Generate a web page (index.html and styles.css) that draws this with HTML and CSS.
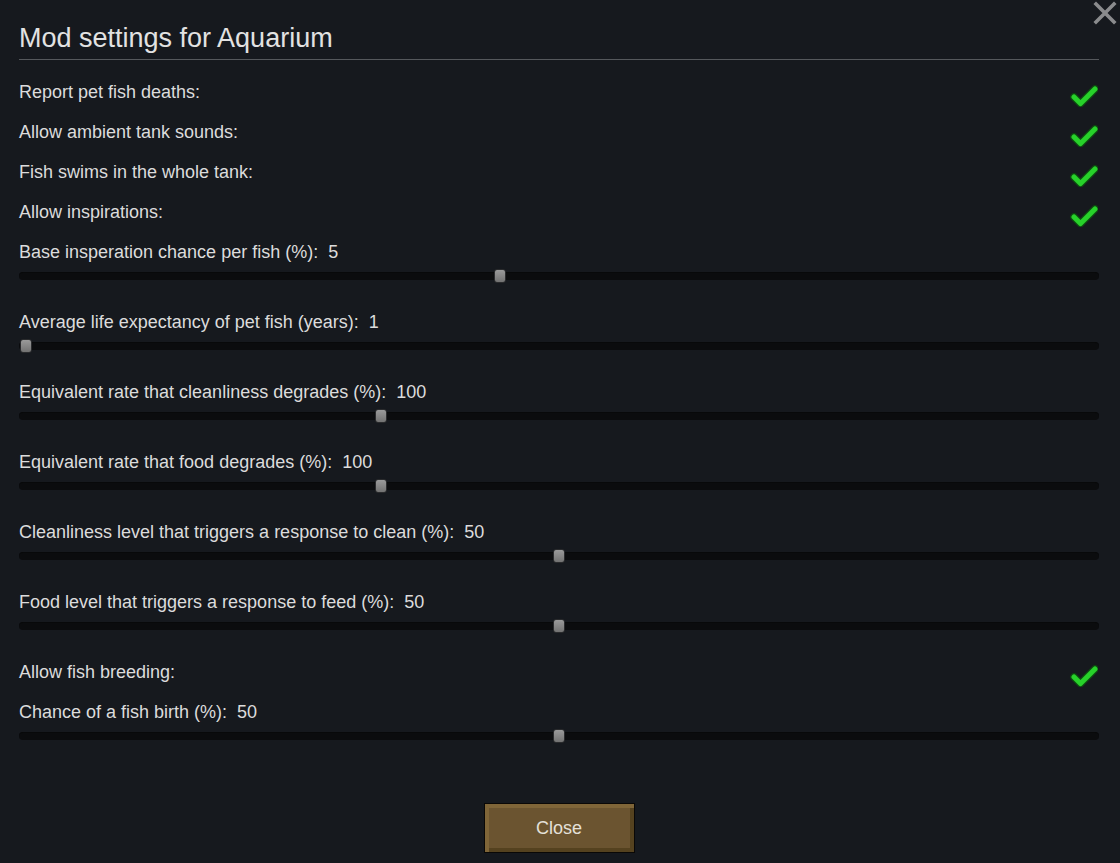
FILE: index.html
```html
<!DOCTYPE html>
<html>
<head>
<meta charset="utf-8">
<link rel="stylesheet" href="styles.css">
</head>
<body>
<div class="window">
  <button class="close-x" aria-label="Close">
    <svg width="24" height="24" viewBox="0 0 24 24"><path d="M3 3 L21 21 M21 3 L3 21" stroke="#8a8b8d" stroke-width="3.6" stroke-linecap="square"/></svg>
  </button>
  <h1 class="title">Mod settings for Aquarium</h1>
  <div class="settings">
    <div class="check-row"><span class="label">Report pet fish deaths:</span><span class="check"><svg width="28" height="24" viewBox="0 0 28 24"><polyline points="4,14 10.5,20.5 25,6" class="ck-out"/><polyline points="4,14 10.5,20.5 25,6" class="ck-in"/></svg></span></div>
    <div class="check-row"><span class="label">Allow ambient tank sounds:</span><span class="check"><svg width="28" height="24" viewBox="0 0 28 24"><polyline points="4,14 10.5,20.5 25,6" class="ck-out"/><polyline points="4,14 10.5,20.5 25,6" class="ck-in"/></svg></span></div>
    <div class="check-row"><span class="label">Fish swims in the whole tank:</span><span class="check"><svg width="28" height="24" viewBox="0 0 28 24"><polyline points="4,14 10.5,20.5 25,6" class="ck-out"/><polyline points="4,14 10.5,20.5 25,6" class="ck-in"/></svg></span></div>
    <div class="check-row"><span class="label">Allow inspirations:</span><span class="check"><svg width="28" height="24" viewBox="0 0 28 24"><polyline points="4,14 10.5,20.5 25,6" class="ck-out"/><polyline points="4,14 10.5,20.5 25,6" class="ck-in"/></svg></span></div>

    <div class="slider">
      <div class="label">Base insperation chance per fish (%):&nbsp; 5</div>
      <div class="track"><span class="thumb" style="--f:0.4444"></span></div>
    </div>
    <div class="slider">
      <div class="label">Average life expectancy of pet fish (years):&nbsp; 1</div>
      <div class="track"><span class="thumb" style="--f:0"></span></div>
    </div>
    <div class="slider">
      <div class="label">Equivalent rate that cleanliness degrades (%):&nbsp; 100</div>
      <div class="track"><span class="thumb" style="--f:0.3333"></span></div>
    </div>
    <div class="slider">
      <div class="label">Equivalent rate that food degrades (%):&nbsp; 100</div>
      <div class="track"><span class="thumb" style="--f:0.3333"></span></div>
    </div>
    <div class="slider">
      <div class="label">Cleanliness level that triggers a response to clean (%):&nbsp; 50</div>
      <div class="track"><span class="thumb" style="--f:0.5"></span></div>
    </div>
    <div class="slider">
      <div class="label">Food level that triggers a response to feed (%):&nbsp; 50</div>
      <div class="track"><span class="thumb" style="--f:0.5"></span></div>
    </div>

    <div class="check-row"><span class="label">Allow fish breeding:</span><span class="check"><svg width="28" height="24" viewBox="0 0 28 24"><polyline points="4,14 10.5,20.5 25,6" class="ck-out"/><polyline points="4,14 10.5,20.5 25,6" class="ck-in"/></svg></span></div>
    <div class="slider">
      <div class="label">Chance of a fish birth (%):&nbsp; 50</div>
      <div class="track"><span class="thumb" style="--f:0.5"></span></div>
    </div>
  </div>
  <div class="footer">
    <button class="btn-close">Close</button>
  </div>
</div>
</body>
</html>
```

FILE: styles.css
```css
html, body {
  margin: 0;
  padding: 0;
  background: #16191e;
}
body {
  width: 1120px;
  height: 863px;
  overflow: hidden;
  font-family: "Liberation Sans", Arial, sans-serif;
  color: #dcdcdc;
}
.window {
  position: relative;
  padding: 0 21px 0 19px;
}
.close-x {
  position: absolute;
  top: 1px;
  right: 3px;
  width: 24px;
  height: 24px;
  padding: 0;
  border: 0;
  background: none;
}
.close-x svg { display: block; }
.title {
  margin: 0;
  padding: 23px 0 6px;
  font-size: 27px;
  line-height: 30px;
  font-weight: normal;
  color: #e2e2e2;
  border-bottom: 1px solid #55585c;
}
.settings {
  margin-top: 12px;
}
.label {
  font-size: 18px;
  line-height: 40px;
  white-space: nowrap;
}
.check-row {
  display: flex;
  align-items: center;
  justify-content: space-between;
  height: 40px;
}
.check {
  display: flex;
  margin-top: 6px;
  margin-right: 1px;
}
.ck-out {
  fill: none;
  stroke: #0d4a10;
  stroke-width: 7.5;
  stroke-linejoin: round;
  stroke-linecap: round;
}
.ck-in {
  fill: none;
  stroke: #27d12a;
  stroke-width: 5;
  stroke-linejoin: round;
  stroke-linecap: round;
}
.slider {
  padding-bottom: 22px;
}
.track {
  position: relative;
  height: 8px;
  border-radius: 4px;
  background: #0b0c0e;
  box-shadow: inset 0 1px 0 #08090a;
}
.thumb {
  position: absolute;
  top: -3px;
  left: calc(var(--f) * (100% - 14px) + 1px);
  width: 12px;
  height: 14px;
  box-sizing: border-box;
  border-radius: 3px;
  border: 1px solid #2a2b2d;
  background: linear-gradient(#9a9a9a, #727272);
}
.footer {
  display: flex;
  justify-content: center;
  margin-top: 41px;
}
.btn-close {
  width: 151px;
  height: 50px;
  box-sizing: border-box;
  border: 1px solid #0a0806;
  background: #6b5430;
  box-shadow: inset 4px 4px 0 #7f6538, inset -4px -4px 0 #55421f;
  color: #e4e0d8;
  font-family: "Liberation Sans", Arial, sans-serif;
  font-size: 18px;
  padding: 0;
}
```
